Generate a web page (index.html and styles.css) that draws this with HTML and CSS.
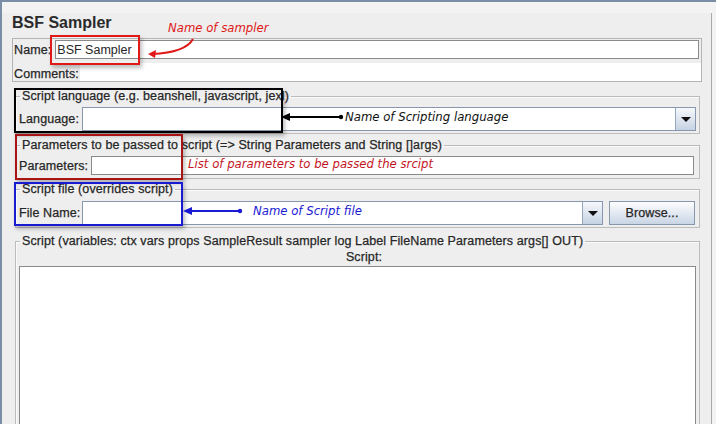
FILE: index.html
```html
<!DOCTYPE html>
<html lang="en">
<head>
    <meta charset="UTF-8">
    <meta name="viewport" content="width=device-width, initial-scale=1.0">
    <title>BSF Sampler</title>
    <link rel="stylesheet" href="styles.css">
</head>
<body>
<div class="frame">
    <div class="panel">
        <h1 class="title">BSF Sampler</h1>

        <div class="name-box">
            <div class="row name-row">
                <label class="lbl">Name:</label>
                <div class="field name-field">BSF Sampler</div>
            </div>
            <div class="row comments-row">
                <label class="lbl">Comments:</label>
                <div class="comments-area"></div>
            </div>
        </div>

        <fieldset class="group lang-group">
            <legend>Script language (e.g. beanshell, javascript, jexl)</legend>
            <div class="row">
                <label class="lbl">Language:</label>
                <div class="combo">
                    <div class="combo-text"></div>
                    <div class="combo-btn"><span class="tri"></span></div>
                </div>
            </div>
        </fieldset>

        <fieldset class="group params-group">
            <legend>Parameters to be passed to script (=&gt; String Parameters and String []args)</legend>
            <div class="row">
                <label class="lbl">Parameters:</label>
                <div class="field params-field"></div>
            </div>
        </fieldset>

        <fieldset class="group file-group">
            <legend>Script file (overrides script)</legend>
            <div class="row">
                <label class="lbl">File Name:</label>
                <div class="combo">
                    <div class="combo-text"></div>
                    <div class="combo-btn"><span class="tri"></span></div>
                </div>
                <button class="browse">Browse...</button>
            </div>
        </fieldset>

        <fieldset class="group script-group">
            <legend>Script (variables: ctx vars props SampleResult sampler log Label FileName Parameters args[] OUT)</legend>
            <div class="script-label">Script:</div>
            <div class="script-area"></div>
        </fieldset>
    </div>

    <!-- annotations drawn over the form -->
    <div class="mark mark-name"></div>
    <div class="mark mark-lang"></div>
    <div class="mark mark-params"></div>
    <div class="mark mark-file"></div>

    <svg class="arrows" width="716" height="424" viewBox="0 0 716 424">
        <path d="M193 39 C 188 48, 176 53, 152 54" fill="none" stroke="#e01818" stroke-width="2"/>
        <path d="M148 54 L156 50 L155 58 Z" fill="#e01818"/>

        <line x1="288" y1="117" x2="340" y2="117" stroke="#000" stroke-width="2"/>
        <path d="M281 117 L290 113 L290 121 Z" fill="#000"/>
        <circle cx="341" cy="117" r="2.2" fill="#000"/>

        <line x1="190" y1="211" x2="239" y2="211" stroke="#1a1ad2" stroke-width="2"/>
        <path d="M183 211 L192 207 L192 215 Z" fill="#1a1ad2"/>
        <circle cx="240" cy="211" r="2.2" fill="#1a1ad2"/>
    </svg>

    <div class="note note-name">Name of sampler</div>
    <div class="note note-lang">Name of Scripting language</div>
    <div class="note note-params">List of parameters to be passed the srcipt</div>
    <div class="note note-file">Name of Script file</div>
</div>
</body>
</html>
```

FILE: styles.css
```css
body {
    margin: 0;
    font-family: "Liberation Sans", Arial, sans-serif;
    color: #262626;
}
.frame {
    position: relative;
    width: 716px;
    height: 424px;
    overflow: hidden;
    box-sizing: border-box;
    border-top: 2px solid #7b8ea6;
    border-left: 2px solid #7b8ea6;
    background-color: #f3f3f3;
}
.panel {
    width: 710px;
    height: 422px;
    box-sizing: border-box;
    padding-left: 10px;
    border-right: 1px solid #a9a9a9;
    background-color: #eeeeee;
}
.title {
    margin: 11px 0 0 0;
    font-size: 16px;
    line-height: 20px;
    font-weight: bold;
    color: #2a2a2a;
}
.lbl {
    font-size: 12.5px;
    letter-spacing: 0.1px;
    -webkit-text-stroke: 0.25px #262626;
    white-space: nowrap;
}
.row {
    display: flex;
    align-items: center;
}

/* name / comments */
.name-box {
    width: 690px;
    margin-top: 5px;
    box-sizing: border-box;
    border: 1px solid #b4b4b4;
}
.name-row {
    padding: 1px 2px 2px 1px;
}
.name-row .lbl {
    margin-right: 4px;
}
.field {
    height: 19px;
    box-sizing: border-box;
    border: 1px solid #8a8a8a;
    background-color: #fff;
    font-size: 12.5px;
    line-height: 18px;
    padding-left: 1px;
}
.name-field {
    flex: 1;
}
.comments-row {
    padding: 2px 0 0 1px;
    height: 20px;
    box-sizing: border-box;
}
.comments-row .lbl {
    padding-top: 3px;
}
.comments-area {
    flex: 1;
    align-self: stretch;
    margin-left: 1px;
    background-color: #fff;
}

/* titled groups */
.group {
    width: 685px;
    margin: 7px 0 0 3px;
    padding: 4px 3px 2px 3px;
    box-sizing: border-box;
    border: 1px solid #bcbcbc;
    box-shadow: inset 1px 1px 0 #fafafa;
}
.group legend {
    margin-left: 1px;
    padding: 0 2px;
    font-size: 12.5px;
    line-height: 14px;
    letter-spacing: 0.1px;
    -webkit-text-stroke: 0.25px #262626;
    white-space: nowrap;
}
.params-group {
    margin-top: 4px;
    padding-bottom: 3px;
}
.file-group {
    margin-top: 3px;
    padding-top: 5px;
}
.script-group {
    margin-top: 6px;
    padding-top: 2px;
    height: 200px;
}
.lang-group .lbl {
    margin-right: 3px;
}
.params-group .lbl {
    margin-right: 3px;
}
.params-field {
    flex: 1;
    margin-right: 2px;
}
.file-group .lbl {
    margin-right: 2px;
}

/* combo box */
.combo {
    flex: 1;
    display: flex;
    height: 24px;
    box-sizing: border-box;
    border: 1px solid #8798ae;
    background-color: #fff;
}
.combo-text {
    flex: 1;
}
.combo-btn {
    width: 19px;
    display: flex;
    align-items: center;
    justify-content: center;
    border-left: 1px solid #95a5ba;
    background: linear-gradient(#f6f8fb, #c6d3e3);
}
.tri {
    width: 0;
    height: 0;
    border-left: 5px solid transparent;
    border-right: 5px solid transparent;
    border-top: 5px solid #111;
}
.browse {
    width: 86px;
    height: 24px;
    margin-left: 6px;
    margin-right: 1px;
    padding: 0;
    border: 1px solid #8798ae;
    background: linear-gradient(#fdfdfe, #c9d5e5);
    font-family: "Liberation Sans", Arial, sans-serif;
    font-size: 12.5px;
    letter-spacing: 0.1px;
    color: #262626;
    -webkit-text-stroke: 0.25px #262626;
}

/* script area */
.script-label {
    text-align: center;
    font-size: 12.5px;
    line-height: 14px;
    letter-spacing: 0.1px;
    -webkit-text-stroke: 0.25px #262626;
    padding-left: 13px;
}
.script-area {
    margin-top: 2px;
    height: 200px;
    box-sizing: border-box;
    border: 1px solid #8a8a8a;
    background-color: #fff;
}

/* annotations */
.mark {
    position: absolute;
    box-sizing: border-box;
    border: 2px solid;
    box-shadow: 2px 3px 4px rgba(0, 0, 0, 0.25);
}
.mark-name {
    left: 48px;
    top: 33px;
    width: 90px;
    height: 30px;
    border-color: #e01818;
}
.mark-lang {
    left: 12px;
    top: 86px;
    width: 269px;
    height: 45px;
    border-color: #000;
}
.mark-params {
    left: 13px;
    top: 132px;
    width: 168px;
    height: 46px;
    border-color: #a81414;
}
.mark-file {
    left: 12px;
    top: 180px;
    width: 169px;
    height: 44px;
    border-color: #1a1ad2;
}
.arrows {
    position: absolute;
    left: -2px;
    top: -2px;
}
.note {
    position: absolute;
    font-family: "DejaVu Sans Condensed", "DejaVu Sans", sans-serif;
    font-style: italic;
    font-size: 13px;
    line-height: 16px;
    white-space: nowrap;
}
.note-name {
    left: 166px;
    top: 18px;
    color: #e01818;
}
.note-lang {
    left: 343px;
    top: 107px;
    color: #111;
}
.note-params {
    left: 186px;
    top: 154px;
    color: #c41424;
}
.note-file {
    left: 251px;
    top: 201px;
    color: #1a1ad2;
}
```
